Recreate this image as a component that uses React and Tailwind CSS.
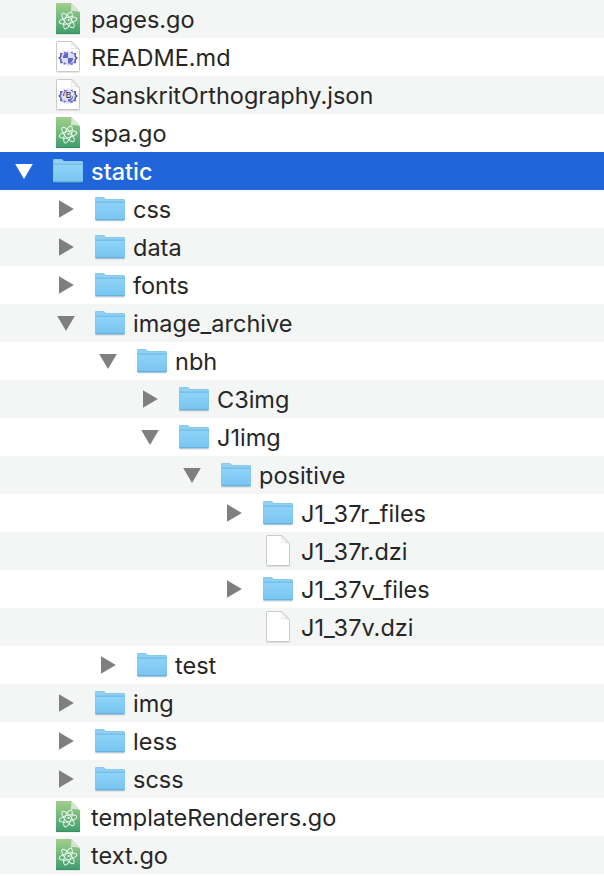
const rows = [
  { name: 'pages.go', kind: 'atom', level: 0 },
  { name: 'README.md', kind: 'md', level: 0 },
  { name: 'SanskritOrthography.json', kind: 'json', level: 0 },
  { name: 'spa.go', kind: 'atom', level: 0 },
  { name: 'static', kind: 'folder', level: 0, open: true, selected: true },
  { name: 'css', kind: 'folder', level: 1 },
  { name: 'data', kind: 'folder', level: 1 },
  { name: 'fonts', kind: 'folder', level: 1 },
  { name: 'image_archive', kind: 'folder', level: 1, open: true },
  { name: 'nbh', kind: 'folder', level: 2, open: true },
  { name: 'C3img', kind: 'folder', level: 3 },
  { name: 'J1img', kind: 'folder', level: 3, open: true },
  { name: 'positive', kind: 'folder', level: 4, open: true },
  { name: 'J1_37r_files', kind: 'folder', level: 5 },
  { name: 'J1_37r.dzi', kind: 'blank', level: 5 },
  { name: 'J1_37v_files', kind: 'folder', level: 5 },
  { name: 'J1_37v.dzi', kind: 'blank', level: 5 },
  { name: 'test', kind: 'folder', level: 2 },
  { name: 'img', kind: 'folder', level: 1 },
  { name: 'less', kind: 'folder', level: 1 },
  { name: 'scss', kind: 'folder', level: 1 },
  { name: 'templateRenderers.go', kind: 'atom', level: 0 },
  { name: 'text.go', kind: 'atom', level: 0 },
];

const indents = ['pl-0', 'pl-[42px]', 'pl-[84px]', 'pl-[126px]', 'pl-[168px]', 'pl-[210px]'];

function Defs() {
  return (
    <svg className="absolute size-0" aria-hidden="true">
      <defs>
        <linearGradient id="folder" x1="0" y1="0" x2="0" y2="1">
          <stop offset="0" stopColor="#8fd3f8" />
          <stop offset="1" stopColor="#78c5f1" />
        </linearGradient>
        <linearGradient id="atom" x1="0" y1="0" x2="0" y2="1">
          <stop offset="0" stopColor="#a5cd8c" />
          <stop offset="0.5" stopColor="#6fb97c" />
          <stop offset="1" stopColor="#3f9c6c" />
        </linearGradient>
      </defs>
    </svg>
  );
}

function Folder() {
  return (
    <svg width="32" height="28" viewBox="0 0 32 28">
      <path d="M1.5 25.8h29" stroke="#000" strokeOpacity=".16" strokeWidth="1.2" />
      <path d="M1 3.4Q1 2 2.4 2H9q1 0 1.6.7l.8.9q.5.5 1.3.5h16.6Q31 4.100 31 5.600V24q0 1.300-1.300 1.300H2.300Q1 25.300 1 24Z" fill="#7cc4ea" />
      <path d="M1.500 3.500q0-1 1-1H9q.8 0 1.300.600l.8.900q.6.600 1.500.600h16.700q1.200 0 1.200 1.200V7h-29Z" fill="#8fd0f4" />
      <path d="M1.400 7.400h29.200V23.800q0 .8-.8.8H2.200q-.8 0-.8-.8Z" fill="url(#folder)" />
      <path d="M1.400 7.100h29.200" stroke="#69b2dc" strokeWidth=".8" />
      <path d="M1.400 24.800h29.200" stroke="#5ca6d4" strokeWidth=".9" />
    </svg>
  );
}

function Page() {
  return (
    <>
      <path d="M1.500 32.200h23" stroke="#000" strokeOpacity=".14" />
      <path d="M1.500 2.500q0-1 1-1H16.800q3.900 3 7.700 8.300V30.700q0 .8-.8.8H2.300q-.8 0-.8-.8Z" fill="#fff" stroke="#c3c5c5" strokeWidth=".9" />
      <path d="M16 1.800q.7 3.500-.2 7.400 4.500-.8 8.400.9Q20.800 4.700 16 1.800Z" fill="#dfe1e1" />
      <path d="M16.400 3.400q2.800 2 5 5-2.600-.5-5.200.1.500-2.500.2-5.100Z" fill="#fbfbfb" />
    </>
  );
}

function Gear() {
  return (
    <g>
      <path d="M13 9.800l1.700 2.200 2.500-1.100.7 2.500 2.500-.1-.2 2.600 1.600 2.100-1.600 1.900.2 2.800-2.500.2-1 2.400-2.300-.8L13 26.600l-1.700-2.100-2.300.8-1-2.400-2.500-.2.200-2.800-1.600-1.900 1.600-2.100-.2-2.600 2.500.1.700-2.500 2.500 1.100Z" fill="#dddff5" />
      <path d="M13 12.300v5.700H7.800q.2-4.800 5.200-5.700ZM13 18h5.200q-.2 4.700-5.200 5.700Z" fill="#6467c5" />
      <path d="M8.700 11.400l3.100 1-2.500 1.500ZM17.500 11.300l.4 2.600-2.600-1.300ZM8.500 24.700l.3-2.700 2.700 1.700ZM13.500 23.800l3.900 1.400.9-2.900Z" fill="#7174cc" />
      <path d="M7.500 13.600H5.900v2.900L4.200 18l1.700 1.500v3h1.600M18.600 13.600h1.600v2.900l1.700 1.500-1.700 1.500v3h-1.600" fill="none" stroke="#4549b4" strokeWidth="1.300" />
    </g>
  );
}

function FileIcon({ kind }) {
  if (kind === 'atom') {
    return (
      <svg width="26" height="34" viewBox="0 0 26 34">
        <path d="M1 32h24" stroke="#000" strokeOpacity=".12" />
        <path d="M1 1h15.200Q20.500 4.600 25 10.200V32H1Z" fill="url(#atom)" />
        <path d="M1.300 31.500h23.400" stroke="#348c5f" strokeOpacity=".7" />
        <path d="M16.200 1q.5 4.200-.4 8.200 5-.6 9.200 1Q21.500 5 16.200 1Z" fill="#d4e6cf" />
        <g fill="none" stroke="#f2fbf4" strokeWidth=".95">
          <ellipse cx="13" cy="18.500" rx="9" ry="3.200" transform="rotate(-12 13 18.500)" />
          <ellipse cx="13" cy="18.500" rx="9" ry="3.200" transform="rotate(50 13 18.500)" />
          <ellipse cx="13" cy="18.500" rx="9" ry="3.200" transform="rotate(110 13 18.500)" />
        </g>
        <circle cx="13.600" cy="18" r="1.100" fill="#f2fbf4" />
      </svg>
    );
  }
  return (
    <svg width="26" height="34" viewBox="0 0 26 34">
      <Page />
      {kind !== 'blank' && <Gear />}
      {kind === 'json' && (
        <>
          <circle cx="13.500" cy="17" r="4.300" fill="#e9e9f0" fillOpacity=".85" />
          <text x="13.700" y="20" textAnchor="middle" fontSize="8.500" fill="#222" className="font-['Liberation_Sans',sans-serif]">B</text>
        </>
      )}
    </svg>
  );
}

function Disclosure({ open, selected }) {
  return (
    <svg width="20" height="20" viewBox="0 0 20 20" className={selected ? 'fill-white' : 'fill-[#7f7f7f]'}>
      {open ? <path d="M1.200 3h17.600L10 18Z" /> : <path d="M3 1.200v17.600L17.800 10Z" />}
    </svg>
  );
}

function Row({ row, striped }) {
  const { name, kind, level, open, selected } = row;
  return (
    <li className={`h-[38px] ${striped ? 'bg-[#f4f5f5]' : 'bg-white'}`}>
      <div className={`flex h-[38px] items-start ${indents[level]} ${selected ? 'h-[36px] bg-[#2066da] text-white' : 'text-[#262626]'}`}>
        <div className="flex w-12 shrink-0 justify-center pt-[9px]">
          {kind === 'folder' && <Disclosure open={open} selected={selected} />}
        </div>
        <div className={`flex w-10 shrink-0 justify-center ${kind === 'folder' ? 'pt-[5px]' : 'pt-[2px]'}`}>
          {kind === 'folder' ? <Folder /> : <FileIcon kind={kind} />}
        </div>
        <span className={`pl-[3px] text-[23.5px] leading-[39px] whitespace-nowrap ${selected ? 'font-medium' : ''}`}>{name}</span>
      </div>
    </li>
  );
}

export default function App() {
  return (
    <main className="h-[876px] w-[604px] overflow-hidden bg-white font-['Inter','Liberation_Sans',sans-serif]">
      <Defs />
      <ul>
        {rows.map((row, i) => (
          <Row key={row.name} row={row} striped={i % 2 === 0} />
        ))}
      </ul>
    </main>
  );
}
